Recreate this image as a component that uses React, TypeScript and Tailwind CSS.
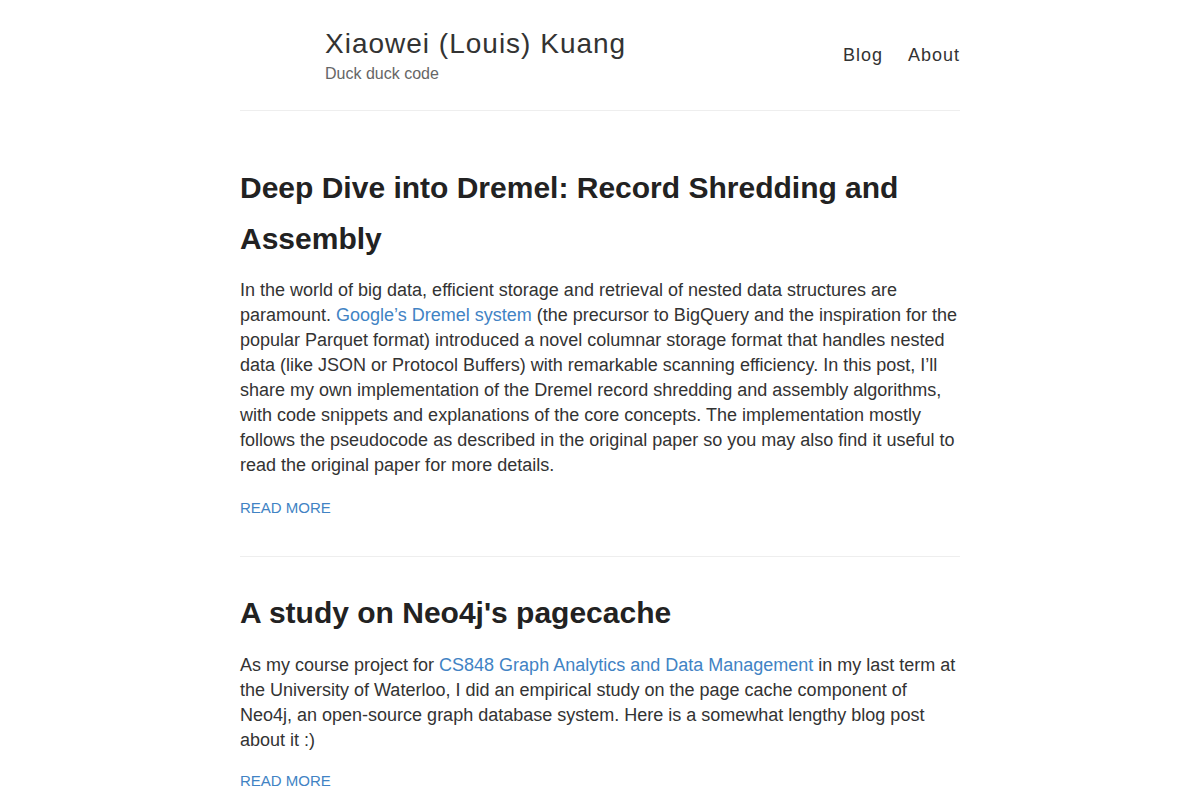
import React from "react";

export default function App() {
  return (
    <div className="min-h-screen bg-white" style={{ fontFamily: '"Liberation Sans", Arial, sans-serif' }}>
      <div className="mx-auto w-[720px]">
        <header className="flex items-start justify-between border-b border-[#eeeeee] pt-[25px] pb-[25px]">
          <div className="pl-[85px]">
            <div className="text-[28px] leading-[38px] tracking-[1px] text-[#333333]">Xiaowei (Louis) Kuang</div>
            <div className="text-[16px] leading-[22px] text-[#666666]">Duck duck code</div>
          </div>
          <nav className="flex gap-[25px] pt-[19px] text-[18px] leading-[22px] tracking-[1px] text-[#333333]">
            <span>Blog</span>
            <span>About</span>
          </nav>
        </header>

        <article className="border-b border-[#eeeeee] pt-[51px] pb-[37px]">
          <h2 className="text-[30px] font-bold leading-[51px] text-[#222222]">
            Deep Dive into Dremel: Record Shredding and Assembly
          </h2>
          <p className="mt-[14px] text-[18px] leading-[25px] text-[#333333]">
            In the world of big data, efficient storage and retrieval of nested data structures are paramount.{" "}
            <a className="text-[#4183c4]">Google’s Dremel system</a> (the precursor to BigQuery and the inspiration for the popular Parquet format) introduced a novel columnar storage format that handles nested data (like JSON or Protocol Buffers) with remarkable scanning efficiency. In this post, I’ll share my own implementation of the Dremel record shredding and assembly algorithms, with code snippets and explanations of the core concepts. The implementation mostly follows the pseudocode as described in the original paper so you may also find it useful to read the original paper for more details.
          </p>
          <div className="mt-[19px] text-[15px] leading-[22px] text-[#4183c4]">READ MORE</div>
        </article>

        <article className="pt-[30px] pb-[38px]">
          <h2 className="text-[30px] font-bold leading-[51px] text-[#222222]">
            A study on Neo4j's pagecache
          </h2>
          <p className="mt-[15px] text-[18px] leading-[25px] text-[#333333]">
            As my course project for <a className="text-[#4183c4]">CS848 Graph Analytics and Data Management</a> in my last term at the University of Waterloo, I did an empirical study on the page cache component of Neo4j, an open-source graph database system. Here is a somewhat lengthy blog post about it :)
          </p>
          <div className="mt-[17px] text-[15px] leading-[22px] text-[#4183c4]">READ MORE</div>
        </article>
      </div>
    </div>
  );
}
